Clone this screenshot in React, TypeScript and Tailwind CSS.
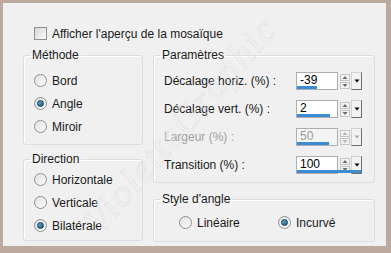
const font = { fontFamily: '"Liberation Sans", "Noto Sans", sans-serif' };

function Radio({ checked }: { checked?: boolean }) {
  return (
    <span className="flex h-[13px] w-[13px] shrink-0 items-center justify-center rounded-full border border-[#8f8f8f] bg-gradient-to-br from-[#e2e2e2] to-[#fbfbfb]">
      {checked && (
        <span className="h-[7px] w-[7px] rounded-full border border-[#0f3d52] bg-gradient-to-br from-[#6fb3d2] to-[#0e5a7c]" />
      )}
    </span>
  );
}

function RadioRow({ label, checked }: { label: string; checked?: boolean }) {
  return (
    <div className="flex h-[23px] items-center gap-[5px]">
      <Radio checked={checked} />
      <span>{label}</span>
    </div>
  );
}

function Group({
  title,
  className,
  children,
}: {
  title: string;
  className: string;
  children: React.ReactNode;
}) {
  return (
    <fieldset
      className={`rounded-[3px] border border-[#d5dfe5] shadow-[inset_1px_1px_0_#ffffff] ${className}`}
    >
      <legend className="ml-[6px] px-[2px] leading-[15px]">{title}</legend>
      {children}
    </fieldset>
  );
}

function Spin({
  value,
  pct,
  disabled,
}: {
  value: string;
  pct: number;
  disabled?: boolean;
}) {
  const arrow = disabled ? "#b5b5b5" : "#6d6d6d";
  return (
    <div className="relative flex h-[18px] w-[66px]">
      <div
        className={`flex h-full w-[42px] items-center border border-[#abadb3] pl-[3px] pb-[2px] ${disabled ? "bg-[#f4f4f4] text-[#9a9a9a]" : "bg-white text-black"}`}
      >
        {value}
      </div>
      <div className="flex h-full w-[13px] flex-col items-center justify-center gap-[1px] px-[1px]">
        <svg width="10" height="7" viewBox="0 0 10 7">
          <rect x="0.5" y="0.5" width="9" height="6" fill="#f2f2f2" stroke="#c6c6c6" />
          <path d="M2.5 5 L5 2 L7.5 5 Z" fill={arrow} />
        </svg>
        <svg width="10" height="7" viewBox="0 0 10 7">
          <rect x="0.5" y="0.5" width="9" height="6" fill="#f2f2f2" stroke="#c6c6c6" />
          <path d="M2.5 2 L5 5 L7.5 2 Z" fill={arrow} />
        </svg>
      </div>
      <div className="flex h-full w-[11px] items-center justify-center border border-[#d0d0d0] border-r-[#6e6e6e] border-b-[#6e6e6e] bg-[#f3f3f3]">
        <svg width="6" height="4" viewBox="0 0 6 4">
          <path d="M0.5 0.5 L5.5 0.5 L3 3.5 Z" fill={disabled ? "#a8a8a8" : "#000000"} />
        </svg>
      </div>
      <div
        className="absolute bottom-[1px] left-[1px] h-[3px] bg-[#3d8bd0]"
        style={{ width: `${Math.round(pct * 64)}px` }}
      />
    </div>
  );
}

function ParamRow({
  label,
  value,
  pct,
  disabled,
}: {
  label: string;
  value: string;
  pct: number;
  disabled?: boolean;
}) {
  return (
    <div className="flex h-[28px] items-center justify-between">
      <span className={disabled ? "text-[#a0a0a0]" : ""}>{label}</span>
      <Spin value={value} pct={pct} disabled={disabled} />
    </div>
  );
}

export default function App() {
  return (
    <div
      className="relative h-[253px] w-[391px] overflow-hidden bg-[#bcaaa0] pt-[3px] pl-[3px] pr-[5px] pb-[7px] text-[12px] text-[#1a1a1a]"
      style={font}
    >
      <div className="flex h-full w-full flex-col bg-[#f0f0f0] pl-[20px] pt-[24px]">
        <div className="flex h-[13px] items-center gap-[5px] pl-[11px]">
          <span className="h-[13px] w-[13px] border border-[#8f8f8f] bg-gradient-to-br from-[#d8d8d8] to-[#fafafa]" />
          <span>Afficher l'aperçu de la mosaïque</span>
        </div>
        <div className="mt-[8px] flex gap-[10px]">
          <div className="flex w-[120px] flex-col gap-[7px]">
            <Group title="Méthode" className="h-[97px]">
              <div className="pl-[10px] pt-[6px]">
                <RadioRow label="Bord" />
                <RadioRow label="Angle" checked />
                <RadioRow label="Miroir" />
              </div>
            </Group>
            <Group title="Direction" className="h-[89px]">
              <div className="pl-[10px] pt-[1px]">
                <RadioRow label="Horizontale" />
                <RadioRow label="Verticale" />
                <RadioRow label="Bilatérale" checked />
              </div>
            </Group>
          </div>
          <div className="flex w-[222px] flex-col gap-[9px]">
            <Group title="Paramètres" className="h-[135px]">
              <div className="pl-[10px] pr-[12px] pt-[4px]">
                <ParamRow label="Décalage horiz. (%) :" value="-39" pct={0.305} />
                <ParamRow label="Décalage vert. (%) :" value="2" pct={0.51} />
                <ParamRow label="Largeur (%) :" value="50" pct={0.5} disabled />
                <ParamRow label="Transition (%) :" value="100" pct={1} />
              </div>
            </Group>
            <Group title="Style d'angle" className="h-[50px]">
              <div className="flex items-center pl-[25px] pt-[4px]">
                <div className="w-[99px]">
                  <RadioRow label="Linéaire" />
                </div>
                <RadioRow label="Incurvé" checked />
              </div>
            </Group>
          </div>
        </div>
      </div>
      <div
        className="pointer-events-none absolute left-[180px] top-[125px] -translate-x-1/2 -translate-y-1/2 -rotate-[49deg] whitespace-nowrap text-[38px] italic tracking-[2px] text-transparent"
        style={{ WebkitTextStroke: "0.5px #e0e0e0", fontFamily: '"Liberation Serif", serif' }}
      >
        VioletteGraphic
      </div>
    </div>
  );
}
